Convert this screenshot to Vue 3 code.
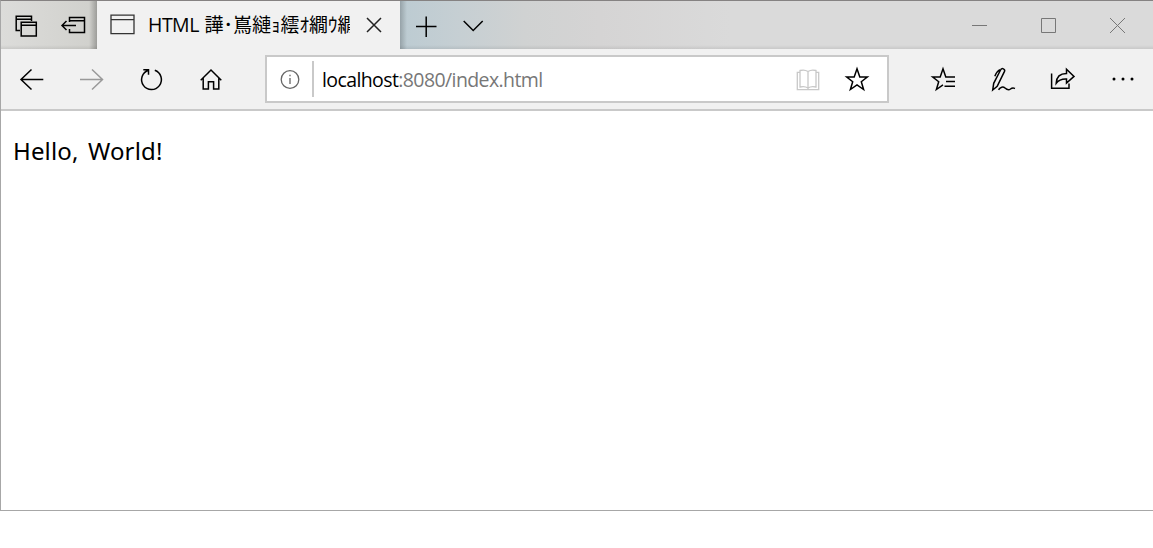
<template>
  <div class="window">
    <!-- Title bar with the tab strip -->
    <div class="title-bar">
      <div class="tab-tools">
        <button class="strip-btn">
          <svg class="icon" viewBox="0 0 32 32">
            <path d="M11 21.5H7.2V7.2H22.5V12M7.2 10.3H22.5M12.2 13.2H27.3V27H12.2ZM12.2 16.3H27.3" />
          </svg>
        </button>
        <button class="strip-btn">
          <svg class="icon" viewBox="0 0 32 32">
            <path d="M12.5 13V8.5H27.5V23.5H12.5V20M12.5 11.7H27.5M19 16.5H5M9.5 12L5 16.5L9.5 21" />
          </svg>
        </button>
      </div>

      <div class="tab">
        <svg class="page-icon" viewBox="0 0 26 22">
          <path d="M2 2.2H25V20.7H2ZM2 6.7H25" />
        </svg>
        <div class="tab-title">HTML <span class="tab-title-cjk">譁･嶌縺ｮ繧ｵ繝ｳ繝</span></div>
        <svg class="tab-close" viewBox="0 0 16 16">
          <path d="M1 1L15 15M15 1L1 15" />
        </svg>
      </div>

      <div class="tab-strip">
        <button class="strip-btn">
          <svg class="icon" viewBox="0 0 32 32"><path d="M6 17.6H26.5M16.2 7.5V28" /></svg>
        </button>
        <button class="strip-btn">
          <svg class="icon" viewBox="0 0 32 32"><path d="M5.7 12L15.2 21.5L24.7 12" /></svg>
        </button>
      </div>

      <div class="window-controls">
        <button v-for="c in controls" :key="c.name" class="control-btn" :aria-label="c.name">
          <svg class="control-icon" viewBox="0 0 21 22"><path :d="c.path" /></svg>
        </button>
      </div>
    </div>

    <!-- Navigation bar -->
    <div class="nav-bar">
      <button v-for="n in navButtons" :key="n.name" class="nav-btn" :class="{ disabled: n.disabled }" :aria-label="n.name">
        <svg class="icon" viewBox="0 0 32 32"><path :d="n.path" /></svg>
      </button>

      <div class="address-bar">
        <div class="site-info">
          <svg class="icon info" viewBox="0 0 32 32">
            <circle cx="16" cy="16.5" r="8.8" />
            <path d="M16 15V21M16 11.8V13.2" />
          </svg>
        </div>
        <div class="url"><span class="host">{{ host }}</span>{{ path }}</div>
        <button class="address-btn">
          <svg class="icon book" viewBox="0 0 32 32">
            <path d="M16 8.5C13.5 6.8 10.5 6.8 8 7.5V24C10.5 23.3 13.5 23.3 16 25C18.5 23.3 21.5 23.3 24 24V7.5C21.5 6.8 18.5 6.8 16 8.5ZM16 8.5V26M8 9.3H5.3V26.7H26.7V9.3H24" />
          </svg>
        </button>
        <button class="address-btn">
          <svg class="icon" viewBox="0 0 32 32">
            <path d="M16 5.8L18.8 14H26.3L20.3 18.7L22.6 26.5L16 21.8L9.4 26.5L11.7 18.7L5.7 14H13.2Z" />
          </svg>
        </button>
      </div>

      <div class="tools">
        <button class="nav-btn">
          <svg class="icon" viewBox="0 0 32 32">
            <path d="M28 14H18.8L16 5.8L13.2 14H5.7L11.7 18.7L9.4 26.5L16 21.8M19 18.5H28M17.5 23.2H28" />
          </svg>
        </button>
        <button class="nav-btn">
          <svg class="icon" viewBox="0 0 32 32">
            <path d="M5.7 27L6.7 20.3L13.8 6.5C14.7 4.5 18.5 6.2 17.5 8.4L10.2 23.3L5.7 27ZM13 6.7C10.5 8 9 10.5 7.8 13.3" />
            <path d="M11.5 26.8C13.5 24 16 23.2 18 25S21.5 27.5 23.5 26S26 24.8 28 25.5" />
          </svg>
        </button>
        <button class="nav-btn">
          <svg class="icon" viewBox="0 0 32 32">
            <path d="M4.6 10.5V25.2H22V20.5M9.2 20.2C9.5 13.8 13.3 10.5 19.5 10.5V6.2L27 13.4L19.5 20V16C14.8 15.8 11.7 16.8 9.2 20.2Z" />
          </svg>
        </button>
        <button class="nav-btn">
          <svg class="icon dots" viewBox="0 0 32 32">
            <circle cx="7" cy="16" r="1.5" />
            <circle cx="16" cy="16" r="1.5" />
            <circle cx="25" cy="16" r="1.5" />
          </svg>
        </button>
      </div>
    </div>

    <main class="page">
      <p class="greeting">Hello, World!</p>
    </main>
  </div>
</template>

<script setup>
const host = 'localhost'
const path = ':8080/index.html'

const controls = [
  { name: 'Minimize', path: 'M2 11.5H17' },
  { name: 'Maximize', path: 'M2.5 4.5H16.5V18.5H2.5Z' },
  { name: 'Close', path: 'M2 4L17 19M17 4L2 19' },
]

const navButtons = [
  { name: 'Back', path: 'M27.3 16.5H5M15.5 6.5L5 16.5L15.5 26.5' },
  { name: 'Forward', path: 'M4 16.5H26.5M16 6.5L26.5 16.5L16 26.5', disabled: true },
  { name: 'Refresh', path: 'M7.3 6.7H12.5V11.8M12.5 7.2A9.9 9.9 0 1 0 18.8 7.3' },
  { name: 'Home', path: 'M4.7 17.2L15 7L25.3 17.2M7.2 15V26H12.4V18.7H17.6V26H22.8V15' },
]
</script>

<style>
body {
  background: #fff;
}
</style>

<style scoped>
.window {
  box-sizing: border-box;
  height: 511px;
  border: solid #a7a7a7;
  border-width: 1px 0 1px 1px;
  border-top-color: #858282;
  background: #fff;
  font-family: "Open Sans", "Noto Sans", "Noto Sans CJK JP", sans-serif;
  overflow: hidden;
}

button {
  display: flex;
  align-items: center;
  justify-content: center;
  padding: 0;
  border: 0;
  background: none;
  flex-shrink: 0;
}

.icon {
  width: 32px;
  height: 32px;
  fill: none;
  stroke: #000;
  stroke-width: 1.5;
}

/* Title bar */
.title-bar {
  display: flex;
  height: 48px;
  background: #dadada;
}

.tab-tools {
  display: flex;
  width: 96px;
  background:
    linear-gradient(to right, transparent 88px, rgba(0, 0, 0, 0.25)),
    linear-gradient(to top, rgba(0, 0, 0, 0.08), transparent 4px),
    linear-gradient(to right, #dcdcda, #d0d0cc);
}

.strip-btn {
  width: 48px;
  height: 48px;
}

.tab {
  display: flex;
  align-items: center;
  box-sizing: border-box;
  width: 303px;
  padding: 0 18px 0 12px;
  background: #f1f1f1;
}

.page-icon {
  width: 26px;
  height: 22px;
  margin-bottom: 2px;
  fill: none;
  stroke: #333;
  stroke-width: 1.3;
}

.tab-title {
  width: 202px;
  margin-left: 13px;
  overflow: hidden;
  white-space: nowrap;
  font-size: 19.5px;
  line-height: 30px;
  letter-spacing: -0.5px;
  word-spacing: 1px;
  margin-bottom: 2px;
  color: #000;
}

.tab-title-cjk {
  font-family: "Noto Sans CJK JP", sans-serif;
  font-size: 19px;
  font-weight: 400;
  letter-spacing: 0;
}

.tab-close {
  width: 16px;
  height: 16px;
  margin-left: auto;
  stroke: #222;
  stroke-width: 1.5;
}

.tab-strip {
  display: flex;
  flex: 1;
  padding-left: 2px;
  background:
    linear-gradient(to right, rgba(0, 0, 0, 0.2), transparent 7px),
    linear-gradient(to top, rgba(0, 0, 0, 0.08), transparent 4px),
    linear-gradient(to right, #bccbd2, #c6cfd3 60px, #d0d2d2 125px, #d5d4d4 200px, #dadada 330px);
}

.window-controls {
  display: flex;
  background: linear-gradient(to top, rgba(0, 0, 0, 0.08), transparent 4px);
}

.control-btn {
  width: 69px;
}

.control-icon {
  width: 21px;
  height: 22px;
  fill: none;
  stroke: #777;
  stroke-width: 1;
}

/* Navigation bar */
.nav-bar {
  display: flex;
  align-items: center;
  height: 60px;
  padding-left: 1px;
  border-bottom: 2px solid #c9c9c9;
  background: #f1f1f1;
}

.nav-btn {
  width: 60px;
  height: 60px;
}

.nav-btn.disabled .icon {
  stroke: #999;
}

.address-bar {
  display: flex;
  align-items: center;
  flex: 1;
  box-sizing: border-box;
  height: 48px;
  margin: 0 24px 0 23px;
  padding-right: 6px;
  border: 2px solid #c9c9c9;
  background: #fff;
}

.site-info {
  display: flex;
  align-items: center;
  justify-content: center;
  width: 45px;
  height: 36px;
  border-right: 2px solid #c9c9c9;
}

.icon.info {
  stroke: #666;
  stroke-width: 1.3;
}

.url {
  flex: 1;
  margin-left: 8px;
  font-size: 19.5px;
  line-height: 28px;
  letter-spacing: -0.6px;
  padding-top: 1px;
  color: #777;
}

.host {
  color: #000;
}

.address-btn {
  width: 49px;
  height: 44px;
}

.icon.book {
  stroke: #c8c8c8;
  stroke-width: 1.3;
}

.icon.dots {
  fill: #000;
  stroke: none;
}

.tools {
  display: flex;
}

/* Page */
.page {
  padding: 24px 12px;
}

.greeting {
  margin: 0;
  font-family: "Noto Sans", sans-serif;
  font-size: 24px;
  line-height: 32px;
  letter-spacing: 0.15px;
  word-spacing: 3px;
  color: #000;
}
</style>
